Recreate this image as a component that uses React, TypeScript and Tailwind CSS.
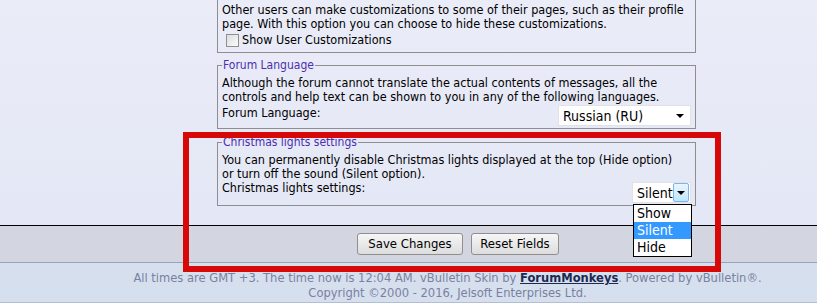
const body = "font-[family-name:'DejaVu_Sans_Condensed','Liberation_Sans',sans-serif]"

function FakeSelect({ value, width, arrowButton }: { value: string; width: string; arrowButton?: boolean }) {
  return (
    <div
      className={`flex h-[21px] items-center justify-between border border-[#e2e2e2] bg-white text-[14px] text-black ${width}`}
    >
      <span className="pl-[4px] leading-none">{value}</span>
      {arrowButton ? (
        <span className="mr-[1px] flex h-[19px] w-[16px] items-center justify-center rounded-[2px] border border-[#7eb4ea] bg-gradient-to-b from-[#eaf6fd] to-[#bee6fd]">
          <span className="h-0 w-0 border-x-[4px] border-t-[4px] border-x-transparent border-t-black" />
        </span>
      ) : (
        <span className="mr-[6px] h-0 w-0 border-x-[4px] border-t-[4px] border-x-transparent border-t-black" />
      )}
    </div>
  )
}

export default function App() {
  return (
    <div className={`relative h-[303px] w-[817px] overflow-hidden text-[12.5px] text-black ${body}`}>
      {/* settings area */}
      <div className="h-[225px] bg-gradient-to-b from-[#eaecf8] to-[#e4e7f5]">
        <div className="ml-[217px] w-[479px]">
          {/* User customizations (top cut off) */}
          <div className="border-x border-b border-[#8e8e8e] px-[4px] pb-[5px] pt-[3px] leading-[14px]">
            <p>
              Other users can make customizations to some of their pages, such as their profile
              <br />
              page. With this option you can choose to hide these customizations.
            </p>
            <label className="mt-[2px] flex items-center gap-[3px] pl-[4px]">
              <span className="h-[13px] w-[13px] border border-[#8f8f8f] bg-gradient-to-br from-[#dcdcdc] to-[#fbfbfb]" />
              Show User Customizations
            </label>
          </div>

          {/* Forum Language */}
          <fieldset className="mt-[5px] border border-[#8e8e8e] px-[4px] pb-[2px] leading-[14px]">
            <legend className="px-[1px] text-[12px] leading-[14px] text-[#4a2fb0]">Forum Language</legend>
            <p className="pt-[4px]">
              Although the forum cannot translate the actual contents of messages, all the
              <br />
              controls and help text can be shown to you in any of the following languages.
            </p>
            <div className="mt-[1px] flex items-start justify-between">
              <span className="pt-[1px]">Forum Language:</span>
              <FakeSelect value="Russian (RU)" width="w-[133px]" />
            </div>
          </fieldset>

          {/* Christmas lights */}
          <fieldset className="mt-[6px] border border-[#8e8e8e] px-[4px] pb-[2px] leading-[14px]">
            <legend className="px-[1px] text-[12px] leading-[14px] text-[#4a2fb0]">Christmas lights settings</legend>
            <p className="pt-[4px]">
              You can permanently disable Christmas lights displayed at the top (Hide option)
              <br />
              or turn off the sound (Silent option).
            </p>
            <div className="flex items-start justify-between">
              <span>Christmas lights settings:</span>
              <div className="mt-[1px]">
                <FakeSelect value="Silent" width="w-[59px]" arrowButton />
              </div>
            </div>
          </fieldset>
        </div>
      </div>

      {/* buttons bar */}
      <div className="h-[37px] border-t border-black bg-[#d3d5e1] pl-[357px] pt-[7px]">
        <div className="flex gap-[8px]">
          <button className="h-[22px] w-[106px] rounded-[3px] border border-[#8f8f8f] bg-gradient-to-b from-[#f6f6f6] to-[#dddddd] text-[13px]">
            Save Changes
          </button>
          <button className="h-[22px] w-[88px] rounded-[3px] border border-[#8f8f8f] bg-gradient-to-b from-[#f6f6f6] to-[#dddddd] text-[13px]">
            Reset Fields
          </button>
        </div>
      </div>

      {/* footer */}
      <div className="h-[41px] border-y border-t-[#9aa3bd] border-b-[#b4bdd3] bg-[#d6dfee] pl-[78px] pt-[7px] text-center text-[12.8px] leading-[15px] text-[#7a81a0]">
        <p>
          All times are GMT +3. The time now is 12:04 AM. vBulletin Skin by{' '}
          <span className="font-bold text-[#1c2a52] underline">ForumMonkeys</span>. Powered by vBulletin®.
        </p>
        <p>Copyright ©2000 - 2016, Jelsoft Enterprises Ltd.</p>
      </div>

      {/* open dropdown list */}
      <ul className="absolute left-[633px] top-[204px] w-[59px] border border-black bg-white text-[14px] leading-[17px]">
        <li className="pl-[3px]">Show</li>
        <li className="bg-[#3399ff] pl-[3px] text-white">Silent</li>
        <li className="pl-[3px]">Hide</li>
      </ul>

      {/* red highlight annotation */}
      <div className="pointer-events-none absolute left-[183px] top-[132px] h-[140px] w-[538px] border-[6px] border-[#d60808]" />
    </div>
  )
}
